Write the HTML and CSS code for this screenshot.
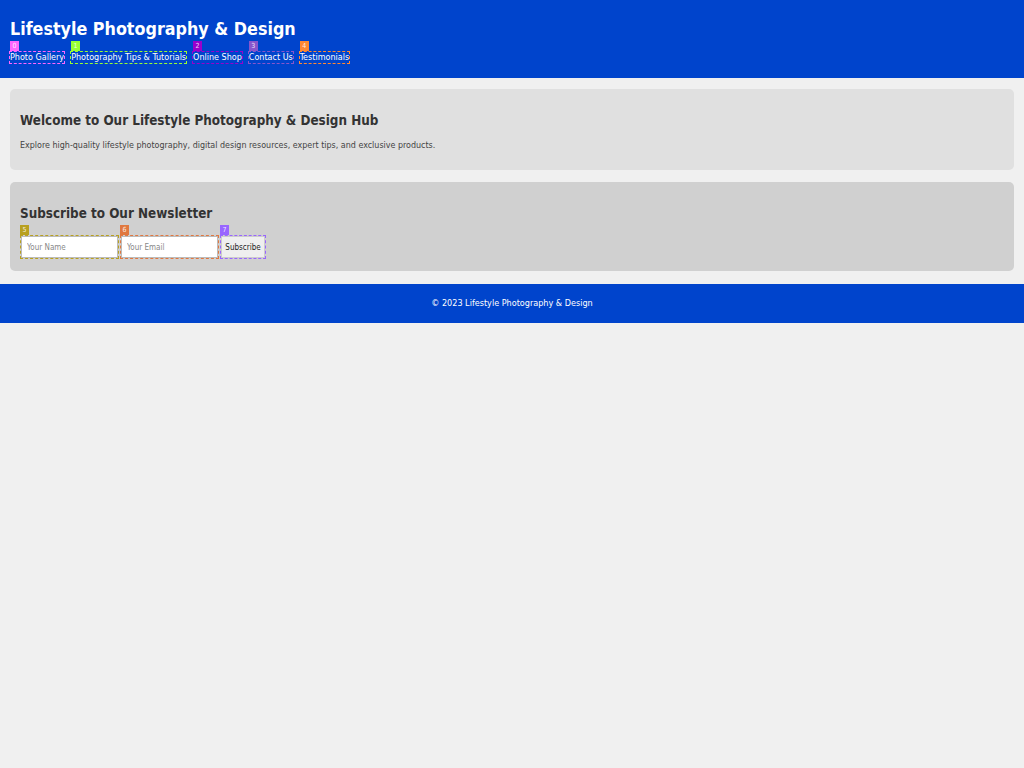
FILE: index.html
```html
<!DOCTYPE html>
<html lang="en">
<head>
<meta charset="utf-8">
<title>Lifestyle Photography &amp; Design</title>
<link rel="stylesheet" href="styles.css">
</head>
<body>
<header class="site-header">
  <h1 class="site-title">Lifestyle Photography &amp; Design</h1>
  <nav class="nav">
    <a class="nav-link c0" href="#"><span class="badge b0">0</span>Photo Gallery</a>
    <a class="nav-link c1" href="#"><span class="badge b1">1</span>Photography Tips &amp; Tutorials</a>
    <a class="nav-link c2" href="#"><span class="badge b2">2</span>Online Shop</a>
    <a class="nav-link c3" href="#"><span class="badge b3">3</span>Contact Us</a>
    <a class="nav-link c4" href="#"><span class="badge b4">4</span>Testimonials</a>
  </nav>
</header>
<main class="main">
  <section class="card card-welcome">
    <h2 class="card-title">Welcome to Our Lifestyle Photography &amp; Design Hub</h2>
    <p class="card-text">Explore high-quality lifestyle photography, digital design resources, expert tips, and exclusive products.</p>
  </section>
  <section class="card card-news">
    <h2 class="card-title">Subscribe to Our Newsletter</h2>
    <form class="form">
      <span class="field c5"><span class="badge b5">5</span><input class="input" type="text" placeholder="Your Name"></span>
      <span class="field c6"><span class="badge b6">6</span><input class="input" type="email" placeholder="Your Email"></span>
      <span class="field c7"><span class="badge b7">7</span><button class="button" type="button">Subscribe</button></span>
    </form>
  </section>
</main>
<footer class="site-footer">
  <p class="footer-text">© 2023 Lifestyle Photography &amp; Design</p>
</footer>
</body>
</html>
```
FILE: styles.css
```css
* { box-sizing: border-box; }
body {
  margin: 0;
  background: #f0f0f0;
  font-family: "DejaVu Sans Condensed", "DejaVu Sans", sans-serif;
  font-stretch: condensed;
  color: #333;
}
.site-header {
  background: #0044cc;
  color: #fff;
  padding: 18px 10px 15px;
}
.site-title {
  margin: 0;
  font-size: 17.75px;
  line-height: 22px;
  font-weight: bold;
}
.nav {
  display: flex;
  gap: 7px;
  margin-top: 12px;
}
.nav-link {
  position: relative;
  color: #fff;
  text-decoration: none;
  font-size: 8.95px;
  line-height: 11px;
  outline-width: 1px;
  outline-style: dashed;
}
.field {
  position: relative;
  display: block;
  outline-width: 1px;
  outline-style: dashed;
}
.badge {
  position: absolute;
  left: 0;
  top: -11px;
  height: 10px;
  min-width: 9px;
  padding: 0 2px;
  font-size: 7px;
  line-height: 10px;
  font-weight: normal;
  color: rgba(255, 255, 255, 0.85);
  text-align: center;
}
.field .badge { top: -11px; left: -1px; }
.c0 { outline-color: #ff66ff; } .b0 { background: #ff66ff; }
.c1 { outline-color: #99ff33; } .b1 { background: #99ff33; }
.c2 { outline-color: #9900cc; } .b2 { background: #9900cc; }
.c3 { outline-color: #8855cc; } .b3 { background: #8855cc; }
.c4 { outline-color: #ff8833; } .b4 { background: #ff8833; }
.c5 { outline-color: #b8a020; } .b5 { background: #b8a020; }
.c6 { outline-color: #e07840; } .b6 { background: #e07840; }
.c7 { outline-color: #9966ff; } .b7 { background: #9966ff; }
.main {
  padding: 11px 10px 13px;
  display: flex;
  flex-direction: column;
  gap: 12px;
}
.card {
  border-radius: 5px;
  padding: 23px 10px 13px;
}
.card-welcome { background: #e0e0e0; padding-bottom: 14px; }
.card-news { background: #d0d0d0; }
.card-title {
  margin: 0;
  font-size: 13.35px;
  line-height: 18px;
  font-weight: bold;
  color: #333;
}
.card-text {
  margin: 9px 0 5px;
  font-size: 8.9px;
  line-height: 12px;
  color: #444;
}
.form {
  display: flex;
  gap: 3px;
  margin-top: 13px;
  padding-left: 1px;
}
.input {
  display: block;
  width: 97px;
  height: 22px;
  border: 1px solid #bbb;
  padding: 0 5px;
  font-family: inherit;
  font-stretch: condensed;
  font-size: 8px;
  background: #fff;
}
.input::placeholder { color: #888; }
.button {
  display: block;
  width: 44px;
  height: 22px;
  padding: 0;
  border: 1px solid #ccc;
  background: #efefef;
  font-family: inherit;
  font-stretch: condensed;
  font-size: 8px;
  color: #222;
  text-align: center;
}
.site-footer {
  background: #0044cc;
  color: #fff;
  text-align: center;
  padding: 13px 0 14px;
}
.footer-text {
  margin: 0;
  font-size: 9px;
  line-height: 12px;
}
```
